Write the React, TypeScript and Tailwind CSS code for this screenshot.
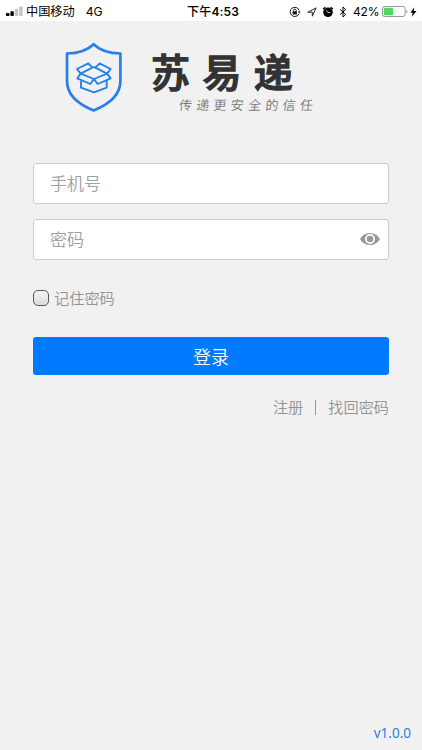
import { useState } from "react";

export default function App() {
  const [phone, setPhone] = useState("");
  const [password, setPassword] = useState("");
  const [visible, setVisible] = useState(false);
  const [remember, setRemember] = useState(false);

  return (
    <div className="flex h-[750px] w-[422px] flex-col overflow-hidden bg-[#f1f1f1] font-['Liberation_Sans','Noto_Sans_CJK_SC',sans-serif]">
      <StatusBar />
      <header className="flex h-[93px] shrink-0 pl-[65px] pt-[21px]">
        <ShieldLogo />
        <div className="ml-[28px] whitespace-nowrap">
          <h1 className="mt-[7px] h-[48px] text-[39px] font-medium leading-[50px] tracking-[12.4px] text-[#333] [-webkit-text-stroke:1.3px_#333]">
            苏易递
          </h1>
          <p className="ml-[28px] h-4 -skew-x-6 font-['Noto_Sans_CJK_SC',sans-serif] text-[13px] font-[350] leading-4 tracking-[4.3px] text-[#777]">
            传递更安全的信任
          </p>
        </div>
      </header>

      <form className="mx-[33px] mt-[49px] flex flex-col" onSubmit={(e) => e.preventDefault()}>
        <input
          className="h-[41px] rounded-[3px] border border-[#ccc] bg-white px-4 pt-[2px] text-[17px] font-[350] outline-none placeholder:text-[#a0a0a0]"
          placeholder="手机号"
          value={phone}
          onChange={(e) => setPhone(e.target.value)}
        />
        <div className="mt-[15px] flex h-[41px] items-center rounded-[3px] border border-[#ccc] bg-white pl-4 pr-2">
          <input
            className="min-w-0 flex-1 pt-[2px] text-[17px] font-[350] outline-none placeholder:text-[#a0a0a0]"
            type={visible ? "text" : "password"}
            placeholder="密码"
            value={password}
            onChange={(e) => setPassword(e.target.value)}
          />
          <button type="button" className="-mt-[2px] mr-[-1px]" onClick={() => setVisible(!visible)}>
            <EyeIcon />
          </button>
        </div>

        <label className="mt-[28px] flex h-5 items-center text-[15.2px] font-[350] text-[#939393]">
          <input
            type="checkbox"
            checked={remember}
            onChange={(e) => setRemember(e.target.checked)}
            className="mr-[5px] size-4 appearance-none rounded-[5px] border border-[#555] bg-linear-to-b from-[#f6f6f6] to-[#dadada] checked:bg-[#007aff]"
          />
          <span className="pt-[2px]">记住密码</span>
        </label>

        <button className="mt-[29px] h-[38px] rounded-[3px] bg-[#007aff] pt-[4px] text-[18px] font-[350] text-white">登录</button>

        <div className="mt-[21px] flex h-[22px] items-center justify-end text-[15.2px] font-[350] text-[#939393]">
          <a className="pt-[2px]">注册</a>
          <span className="mx-3 h-[15px] w-px bg-[#999]" />
          <a className="pt-[2px]">找回密码</a>
        </div>
      </form>

      <footer className="mt-auto pb-[6px] pr-[11px] text-right font-['Noto_Sans',sans-serif] text-[13.5px] leading-[22px] text-[#2b7fdf]">
        v1.0.0
      </footer>
    </div>
  );
}

function StatusBar() {
  return (
    <div className="grid h-[21px] shrink-0 grid-cols-[187px_100px_1fr] items-center bg-white text-[12px] leading-[21px] text-black">
      <div className="flex items-center pl-[6px]">
        <svg width="17" height="11" viewBox="0 0 17 11">
          <rect x="0" y="7" width="3.4" height="3" rx=".7" />
          <rect x="4.4" y="5.2" width="3.4" height="4.8" rx=".7" />
          <rect x="8.8" y="3" width="3.4" height="7" rx=".7" fill="#c4c4c4" />
          <rect x="13.2" y=".5" width="3.4" height="9.5" rx=".7" fill="#c4c4c4" />
        </svg>
        <span className="ml-[3px] pt-[2px] text-[12.2px]">中国移动</span>
        <span className="ml-[11px] font-['Inter',sans-serif] text-[12.2px]">4G</span>
      </div>
      <div className="whitespace-nowrap font-['Inter','Noto_Sans_CJK_SC',sans-serif] font-semibold tracking-[.2px]">
        <span className="font-medium">下午</span>4:53
      </div>
      <div className="flex items-center pl-[2px]">
        <svg width="12" height="12" viewBox="0 0 12 12" fill="none" stroke="#111">
          <path d="M10 7.8A4.6 4.6 0 1 1 10.2 4.5" />
          <path d="M8.8 5.4h2.9L10.2 7.6Z" fill="#111" stroke="none" />
          <path d="M3.6 5.3h4.3v3.2H3.6Z" fill="#111" stroke="none" />
          <path d="M4.5 5.5V4.4a1.3 1.3 0 0 1 2.6 0v1.1" strokeWidth=".9" />
        </svg>
        <svg className="ml-[6px]" width="10" height="10" viewBox="0 0 10 10" fill="none" stroke="#222" strokeLinejoin="round">
          <path d="M.8 5.2 9.1.9 5.3 9.2V5.2Z" />
        </svg>
        <svg className="ml-[5px]" width="12" height="12" viewBox="0 0 12 12" fill="none" stroke="#000">
          <circle cx="6" cy="6.3" r="4.8" fill="#000" stroke="none" />
          <path d="M1.2 3.3 3.4 1.3M10.8 3.3 8.6 1.3" strokeWidth="1.5" />
          <path d="M3.8 4.4 6 6.5h2.3" stroke="#fff" strokeWidth=".8" />
        </svg>
        <svg className="ml-[5px]" width="8" height="12" viewBox="0 0 8 12" fill="none" stroke="#000">
          <path d="M1 3.3 6.7 8.5 4 11V1L6.7 3.5 1 8.7" />
        </svg>
        <span className="ml-[6px] font-['Inter',sans-serif] text-[12px] tracking-[-.2px]">42%</span>
        <svg className="ml-[3px]" width="26" height="11" viewBox="0 0 26 11">
          <rect x=".5" y=".5" width="22.6" height="10" rx="2" fill="#fff" stroke="#999" />
          <rect x="1.7" y="1.7" width="9.3" height="7.6" rx=".7" fill="#4cd964" />
          <path d="M24.4 3.8v3.5c1.6-.5 1.6-3 0-3.5Z" fill="#999" />
        </svg>
        <svg className="ml-[2px]" width="7" height="10" viewBox="0 0 7 10">
          <path d="M4.3.3.4 5.8h2.3L1.9 9.7 6.5 4H3.7Z" />
        </svg>
      </div>
    </div>
  );
}

function ShieldLogo() {
  return (
    <svg className="shrink-0" width="58" height="70" viewBox="0 0 58 70" fill="none" stroke="#2580ec" strokeLinejoin="round">
      <path
        d="M28.6 2.2C23 7.8 14 11.3 2 11.5V39C2 51.5 12 61.8 28.6 68.4C45.3 61.8 55.4 51.5 55.4 39V11.5C43.3 11.3 34.3 7.8 28.6 2.2Z"
        strokeWidth="2.7"
      />
      {/* open carton */}
      <g transform="translate(3 13) scale(.3333)" strokeWidth="5.6">
        <path d="M27 42 61 25 73 38 38 56ZM128 42 95 25 82 38 117 56ZM73 38 78 36 82 38" />
        <path d="M38 56 28 70 67 87 78 72ZM117 56 128 70 89 87 78 72Z" />
        <path d="M39 77V98L78 112 116 98V77" />
      </g>
    </svg>
  );
}

function EyeIcon() {
  return (
    <svg width="22" height="14" viewBox="0 0 22 14" fill="none">
      <path d="M1 7C3.2 3 6.9 1 11 1s7.8 2 10 6c-2.2 4-5.9 6-10 6S3.2 11 1 7Z" fill="#999" />
      <circle cx="11" cy="7" r="4.1" stroke="#fff" strokeWidth="1.7" />
    </svg>
  );
}
